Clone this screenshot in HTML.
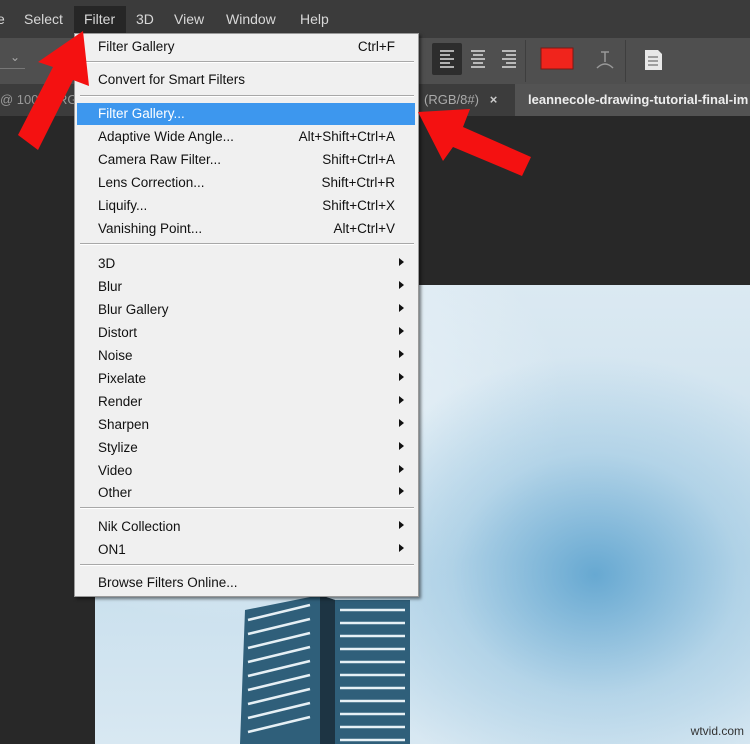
<!DOCTYPE html>
<html><head><meta charset="utf-8"><style>
*{margin:0;padding:0;box-sizing:border-box}
body{width:750px;height:744px;overflow:hidden;background:#282828;position:relative;font-family:"Liberation Sans",sans-serif}
.a{position:absolute;white-space:nowrap}
.mb{color:#d8d8d8;font-size:14px;top:11px}
.it{position:absolute;left:98px;font-size:13.5px;color:#111;line-height:22px;height:22px;white-space:nowrap}
.sc{position:absolute;right:355px;font-size:13.5px;color:#111;line-height:22px;white-space:nowrap}
.ar{position:absolute;left:399px;width:0;height:0;border-top:4px solid transparent;border-bottom:4px solid transparent;border-left:5px solid #111}
.sep{position:absolute;left:80px;width:334px;height:2px;border-top:1px solid #a8a8a8;border-bottom:1px solid #fff}
</style></head><body>
<div class="a" style="left:0;top:0;width:750px;height:38px;background:#3b3b3b"></div>
<div class="a mb" style="left:-3px">e</div>
<div class="a mb" style="left:24px">Select</div>
<div class="a" style="left:74px;top:6px;width:52px;height:30px;background:#262626"></div>
<div class="a mb" style="left:84px">Filter</div>
<div class="a mb" style="left:136px">3D</div>
<div class="a mb" style="left:174px">View</div>
<div class="a mb" style="left:226px">Window</div>
<div class="a mb" style="left:300px">Help</div>
<div class="a" style="left:0;top:38px;width:750px;height:46px;background:#4f4f4f"></div>
<div class="a" style="left:0;top:68px;width:25px;height:1px;background:#777"></div>
<div class="a" style="left:10px;top:50px;color:#aaa;font-size:12px">⌄</div>
<div class="a" style="left:432px;top:43px;width:30px;height:32px;background:#2d2d2d;border-radius:2px"></div>
<svg class="a" style="left:435px;top:46px" width="250" height="28">
<g stroke="#ddd" stroke-width="1.6">
<path d="M5 5h14M5 9h10M5 13h14M5 17h10M5 21h14"/>
<path d="M36 5h14M38 9h10M36 13h14M38 17h10M36 21h14"/>
<path d="M67 5h14M71 9h10M67 13h14M71 17h10M67 21h14"/>
</g>
<rect x="106" y="2" width="32" height="21" fill="#f0241c" stroke="#7a1a15"/>
<path d="M166 6h8M170 6v10M162 22q8-8 16 0" stroke="#999" fill="none" stroke-width="1.5"/>
<path d="M210 4h13l4 4v16h-17z" fill="#e8e8e8"/><path d="M213 11h10M213 15h10M213 19h10" stroke="#555"/>
</svg>
<div class="a" style="left:525px;top:40px;width:1px;height:42px;background:#3e3e3e"></div>
<div class="a" style="left:625px;top:40px;width:1px;height:42px;background:#3e3e3e"></div>
<div class="a" style="left:0;top:84px;width:750px;height:32px;background:#3c3c3c"></div>
<div class="a" style="left:515px;top:84px;width:235px;height:32px;background:#535353"></div>
<div class="a" style="left:0;top:92px;color:#999;font-size:13px">@ 100% (RG</div>
<div class="a" style="left:424px;top:92px;color:#aaa;font-size:13px">(RGB/8#)&nbsp;&nbsp;&nbsp;<b style="color:#ccc">×</b></div>
<div class="a" style="left:528px;top:92px;color:#eee;font-size:13px;font-weight:bold">leannecole-drawing-tutorial-final-im</div>
<div class="a" style="left:95px;top:285px;width:655px;height:459px;background:radial-gradient(ellipse 260px 220px at 500px 290px,rgba(70,150,200,.75),rgba(150,196,224,.5) 55%,transparent 100%),radial-gradient(ellipse 320px 220px at 150px 120px,#f2f7fa,transparent),linear-gradient(180deg,#dbe9f2,#c8dfed 60%,#d8e8f2)"></div>
<svg class="a" style="left:240px;top:590px" width="175" height="154">
<path d="M5 20L80 5L95 10L170 10L170 154L0 154Z" fill="#2f5f7a"/>
<path d="M80 5L95 10L95 154L80 154Z" fill="#1d3443"/>
<g stroke="#e6f0f5" stroke-width="2.5">
<path d="M8 30L70 15M8 44L70 29M8 58L70 43M8 72L70 57M8 86L70 71M8 100L70 85M8 114L70 99M8 128L70 113M8 142L70 127"/>
<path d="M100 20H165M100 33H165M100 46H165M100 59H165M100 72H165M100 85H165M100 98H165M100 111H165M100 124H165M100 137H165M100 150H165"/>
</g>
</svg>
<div class="a" style="right:6px;top:724px;font-size:12px;color:#333">wtvid.com</div>
<div class="a" style="left:74px;top:33px;width:345px;height:564px;background:#f0f0f0;border:1px solid #999;box-shadow:2px 2px 3px rgba(0,0,0,.5)"></div>
<div class="it" style="top:36px">Filter Gallery</div><div class="sc" style="top:36px">Ctrl+F</div>
<div class="sep" style="top:61px"></div>
<div class="it" style="top:69px">Convert for Smart Filters</div>
<div class="sep" style="top:95px"></div>
<div class="a" style="left:77px;top:103px;width:338px;height:22px;background:#3d97ee"></div>
<div class="it" style="top:103px;color:#fff">Filter Gallery...</div>
<div class="it" style="top:126px">Adaptive Wide Angle...</div><div class="sc" style="top:126px">Alt+Shift+Ctrl+A</div>
<div class="it" style="top:149px">Camera Raw Filter...</div><div class="sc" style="top:149px">Shift+Ctrl+A</div>
<div class="it" style="top:172px">Lens Correction...</div><div class="sc" style="top:172px">Shift+Ctrl+R</div>
<div class="it" style="top:195px">Liquify...</div><div class="sc" style="top:195px">Shift+Ctrl+X</div>
<div class="it" style="top:218px">Vanishing Point...</div><div class="sc" style="top:218px">Alt+Ctrl+V</div>
<div class="sep" style="top:243px"></div>
<div class="it" style="top:253px">3D</div><div class="ar" style="top:258px"></div>
<div class="it" style="top:276px">Blur</div><div class="ar" style="top:281px"></div>
<div class="it" style="top:299px">Blur Gallery</div><div class="ar" style="top:304px"></div>
<div class="it" style="top:322px">Distort</div><div class="ar" style="top:327px"></div>
<div class="it" style="top:345px">Noise</div><div class="ar" style="top:350px"></div>
<div class="it" style="top:368px">Pixelate</div><div class="ar" style="top:373px"></div>
<div class="it" style="top:391px">Render</div><div class="ar" style="top:396px"></div>
<div class="it" style="top:414px">Sharpen</div><div class="ar" style="top:419px"></div>
<div class="it" style="top:437px">Stylize</div><div class="ar" style="top:442px"></div>
<div class="it" style="top:460px">Video</div><div class="ar" style="top:465px"></div>
<div class="it" style="top:482px">Other</div><div class="ar" style="top:487px"></div>
<div class="sep" style="top:507px"></div>
<div class="it" style="top:516px">Nik Collection</div><div class="ar" style="top:521px"></div>
<div class="it" style="top:539px">ON1</div><div class="ar" style="top:544px"></div>
<div class="sep" style="top:564px"></div>
<div class="it" style="top:572px">Browse Filters Online...</div>
<svg class="a" style="left:0;top:0" width="750" height="200">
<path d="M83 31L38 62L53 67L18 135L38 150L73 80L89 86Z" fill="#f41111"/>
<path d="M418 112L470 109L463 127L531 157L522 176L453 147L443 161Z" fill="#f41111"/>
</svg>
</body></html>
